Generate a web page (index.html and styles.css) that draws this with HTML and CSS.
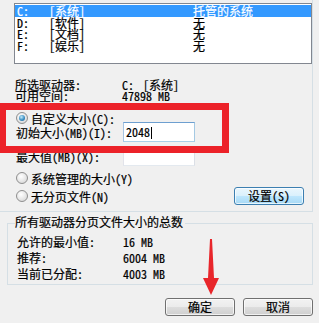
FILE: index.html
```html
<!DOCTYPE html>
<html lang="zh-CN">
<head>
<meta charset="utf-8">
<title>虚拟内存</title>
<link rel="stylesheet" href="styles.css">
</head>
<body>
<div class="dialog">
  <div class="group-upper">
    <div class="listbox">
      <div class="lrow sel"><span class="c1">C:</span><span class="c2">[系统]</span><span class="c3">托管的系统</span></div>
      <div class="lrow"><span class="c1">D:</span><span class="c2">[软件]</span><span class="c3">无</span></div>
      <div class="lrow"><span class="c1">E:</span><span class="c2">[文档]</span><span class="c3">无</span></div>
      <div class="lrow"><span class="c1">F:</span><span class="c2">[娱乐]</span><span class="c3">无</span></div>
    </div>
    <div class="info">
      <div class="irow"><span class="lbl">所选驱动器:</span><span class="val"><span class="drv">C:</span>[系统]</span></div>
      <div class="irow"><span class="lbl">可用空间:</span><span class="val">47898 MB</span></div>
    </div>
    <div class="radio-row custom"><span class="radio on"></span><span>自定义大小(C):</span></div>
    <div class="field-row first"><span class="flbl">初始大小(MB)(I):</span><div class="input focus">2048<span class="caret"></span></div></div>
    <div class="field-row second"><span class="flbl">最大值(MB)(X):</span><div class="input"></div></div>
    <div class="radio-row sys"><span class="radio"></span><span>系统管理的大小(Y)</span></div>
    <div class="radio-row none"><span class="radio-l"><span class="radio"></span><span>无分页文件(N)</span></span><button class="btn default">设置(S)</button></div>
  </div>
  <div class="totals">
    <div class="totals-title"><span>所有驱动器分页文件大小的总数</span></div>
    <div class="totals-box">
      <div class="trow"><span class="lbl">允许的最小值:</span><span>16 MB</span></div>
      <div class="trow"><span class="lbl">推荐:</span><span>6004 MB</span></div>
      <div class="trow"><span class="lbl">当前已分配:</span><span>4003 MB</span></div>
    </div>
  </div>
  <div class="actions"><button class="btn">确定</button><button class="btn">取消</button></div>
  <div class="annot-box"></div>
  <svg class="annot-arrow" width="22" height="60" viewBox="0 0 22 60"><path d="M10 1 L12 1 L14 40 L19 40 L11 57 L3 40 L8 40 Z" fill="#e8262b"/></svg>
</div>
</body>
</html>
```
FILE: styles.css
```css
* { box-sizing: border-box; }
html, body { margin: 0; padding: 0; }
body {
  width: 319px; height: 323px; overflow: hidden;
  background: #f0f0f0;
  font-family: "Noto Sans Mono CJK SC", "Noto Sans CJK SC", monospace;
  font-size: 12px; color: #000;
  -webkit-text-stroke: 0.2px #000;
}
.dialog { position: relative; width: 319px; height: 323px; }

.group-upper {
  width: 313px; height: 212px;
  border-right: 1px solid #d5dfe5; border-bottom: 1px solid #d5dfe5;
  padding: 3px 8px 0 14px;
}
.listbox {
  width: 298px; height: 61px;
  background: #fff; border: 1px solid #828790;
  padding-top: 1px;
}
.lrow { display: flex; height: 11.5px; line-height: 11.5px; padding-left: 2px; white-space: nowrap; }
.lrow.sel { background: #3399ff; color: #fff; -webkit-text-stroke: 0.2px #fff; }
.c1 { width: 32px; }
.c2 { width: 144px; }

.info { margin-top: 15px; }
.irow { display: flex; height: 11px; line-height: 11px; padding-left: 1px; white-space: nowrap; }
.lbl { width: 107px; flex: none; }
.drv { display: inline-block; width: 21px; }

.radio-row { display: flex; align-items: center; padding-left: 2px; gap: 3px; white-space: nowrap; }
.radio-row.custom { margin-top: 11px; height: 12px; }
.radio-row.sys { margin-top: 5px; height: 14px; }
.radio-row.none { margin-top: 2px; height: 18px; justify-content: space-between; }
.radio-l { display: flex; align-items: center; gap: 3px; }
.radio {
  width: 12px; height: 12px; border-radius: 50%; flex: none; position: relative;
  border: 1px solid #8f8f8f;
  background: radial-gradient(circle at 40% 35%, #ffffff 0%, #e6e6e6 55%, #cfcfcf 100%);
}
.radio.on::after {
  content: ""; position: absolute; left: 2px; top: 2px; width: 6px; height: 6px; border-radius: 50%;
  background: radial-gradient(circle at 40% 35%, #c5ecfb 0%, #3a8fc4 55%, #1d5a86 100%);
}

.field-row { display: flex; align-items: center; height: 20px; padding-left: 2px; white-space: nowrap; }
.field-row.first { margin-top: -2px; }
.field-row.second { margin-top: 4px; }
.flbl { width: 107px; flex: none; }
.input {
  width: 72px; height: 20px; background: #fff;
  border: 1px solid; border-color: #abadb3 #dbdfe6 #e3e9ef #e2e3ea;
  padding-left: 2px; line-height: 18px;
}
.input.focus { border-color: #6d9fd0 #a4c9e3 #a9cfe8 #a5c4e3; }
.caret { display: inline-block; width: 1px; height: 12px; background: #000; vertical-align: -2px; margin-left: 1px; }

.btn {
  width: 70px; height: 18px; padding: 0;
  font-family: inherit; font-size: 12px; line-height: 16px; color: #000;
  -webkit-text-stroke: 0.2px #000;
  border: 1px solid #707070; border-radius: 3px;
  background: linear-gradient(#f2f2f2 0%, #ebebeb 50%, #dddddd 51%, #cfcfcf 100%);
  box-shadow: inset 0 0 0 1px rgba(255,255,255,0.7);
}
.btn.default {
  border-color: #3c7fb1;
  background: linear-gradient(#eaf6fd 0%, #d9f0fc 50%, #bee6fd 51%, #a7d9f5 100%);
}

.totals-title { margin-top: 4px; height: 12px; line-height: 12px; padding-left: 15px; position: relative; z-index: 1; white-space: nowrap; }
.totals-title span { background: #f0f0f0; padding-right: 2px; }
.totals-box {
  margin-top: -5px; margin-left: 7px; width: 306px;
  border: 1px solid #d5dfe5;
  padding: 10px 0 2px 9px;
}
.trow { display: flex; height: 16px; line-height: 16px; white-space: nowrap; }
.trow .lbl { width: 106px; }

.actions { margin-top: 13px; display: flex; justify-content: flex-end; gap: 8px; padding-right: 6px; }

.annot-box {
  position: absolute; left: -1px; top: 103px; width: 230px; height: 50px;
  border: 7px solid #ec2229;
}
.annot-arrow { position: absolute; left: 200px; top: 238px; }
```
